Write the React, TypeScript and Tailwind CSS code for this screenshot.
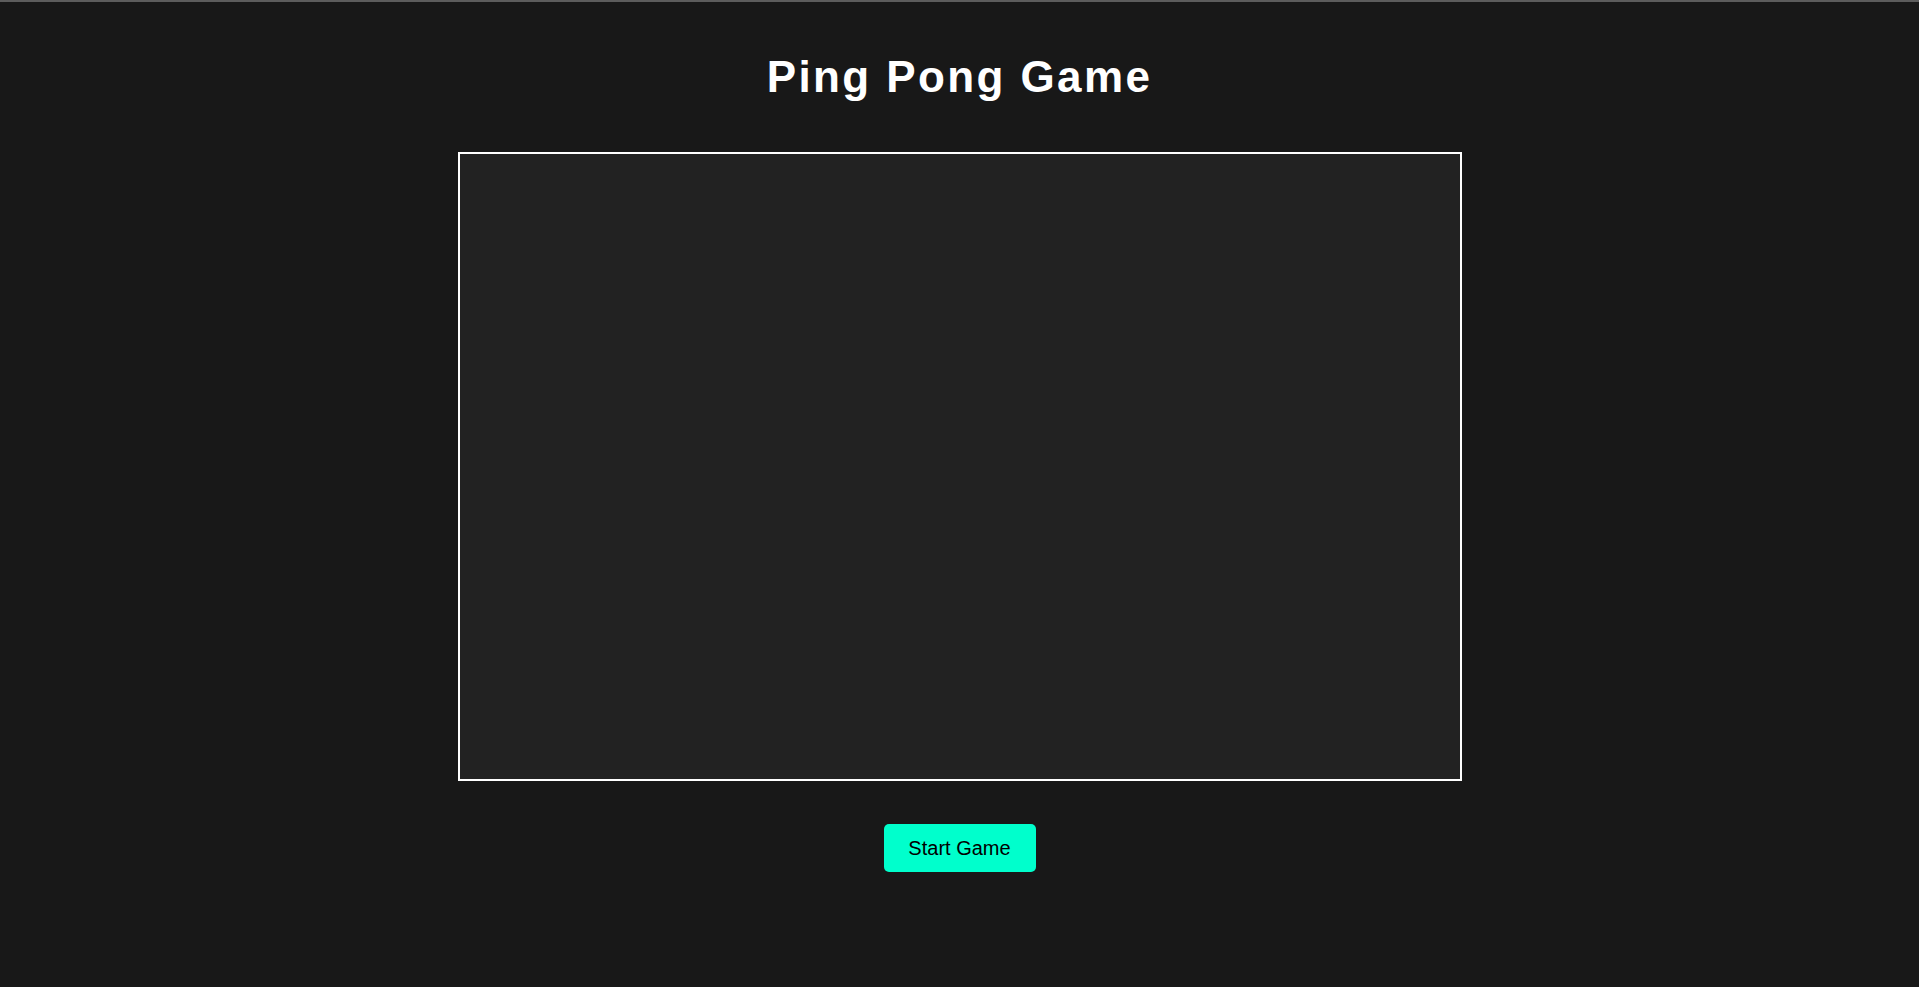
export default function App() {
  return (
    <div
      className="min-h-screen bg-[#181818] border-t-2 border-[#5c5c5c] flex flex-col items-center pt-[50px]"
      style={{ fontFamily: '"Liberation Sans", Arial, sans-serif' }}
    >
      <h1 className="text-[44px] leading-[50px] font-bold tracking-[2.4px] text-white">
        Ping Pong Game
      </h1>

      <div className="mt-[50px] w-[1004px] h-[629px] border-2 border-white bg-[#222222]" />

      <button className="mt-[43px] w-[152px] h-[48px] rounded-[5px] bg-[#00ffcc] text-black text-[20px]">
        Start Game
      </button>
    </div>
  );
}
